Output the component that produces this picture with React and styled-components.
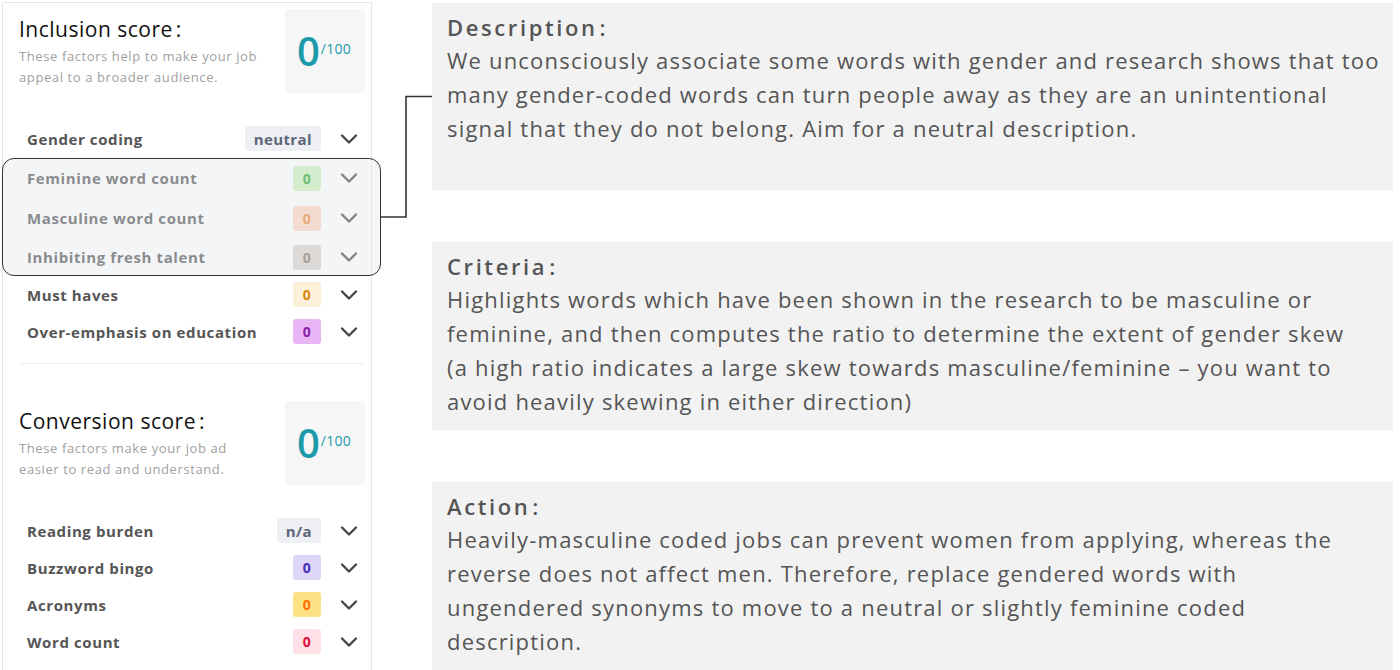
import React from "react";
import styled, { createGlobalStyle } from "styled-components";
import { ChevronDown } from "lucide-react";

const GlobalStyle = createGlobalStyle`
  html, body { margin: 0; padding: 0; background: #fff; }
  body { font-family: "Open Sans", "Liberation Sans", sans-serif; }
  * { box-sizing: border-box; }
`;

const Page = styled.div`
  position: relative;
  display: flex;
  align-items: flex-start;
  height: 670px;
  overflow: hidden;
  padding: 2px 0 0 2px;
`;

const Panel = styled.div`
  width: 370px;
  flex-shrink: 0;
  border: 1px solid #e6e6e6;
  border-bottom: none;
  height: 700px;
`;

const Header = styled.div`
  display: flex;
  justify-content: space-between;
  align-items: flex-start;
  padding: ${(p) => p.$top}px 6px 0 16px;
`;

const HeadText = styled.div`
  padding-top: 8px;
`;

const Title = styled.div`
  font-size: 21px;
  line-height: 24px;
  font-weight: 500;
  color: #111;
  letter-spacing: 0.5px;
`;

const Colon = styled.span`
  margin-left: ${(p) => p.$gap || 3}px;
`;

const Subtitle = styled.div`
  margin-top: 5px;
  font-size: 13px;
  line-height: 21px;
  color: #a0a0a0;
  letter-spacing: 0.6px;
  width: 250px;
`;

const ScoreBox = styled.div`
  width: 80px;
  height: 84px;
  background: #f6f6f6;
  border-radius: 4px;
  display: flex;
  align-items: center;
  justify-content: center;
  color: #1c9aaa;
  padding-right: 2px;
`;

const ScoreBig = styled.span`
  font-size: 40px;
  line-height: 1;
  font-weight: 600;
`;

const ScoreSmall = styled.span`
  font-size: 14px;
  align-self: flex-start;
  margin-top: 30px;
  margin-left: 1px;
  letter-spacing: 0.3px;
`;

const Rows = styled.div`
  margin-top: ${(p) => p.$gap}px;
`;

const Row = styled.div`
  display: flex;
  align-items: center;
  height: ${(p) => p.$h || 37}px;
  padding: 0 8px 0 24px;
`;

const Label = styled.div`
  flex: 1;
  font-size: 15px;
  font-weight: 700;
  letter-spacing: 0.6px;
  color: #555;
`;

const Badge = styled.div`
  min-width: 28px;
  height: 25px;
  padding: 0 ${(p) => (p.$wide ? 9 : 6)}px;
  border-radius: 3px;
  display: inline-flex;
  align-items: center;
  justify-content: center;
  font-size: ${(p) => (p.$wide ? 15 : 14)}px;
  font-weight: 700;
  letter-spacing: 0.4px;
  background: ${(p) => p.$bg};
  color: ${(p) => p.$fg};
`;

const Chevron = styled.div`
  width: 28px;
  margin-left: 14px;
  display: flex;
  align-items: center;
  justify-content: center;
  color: #444;
`;

const Group = styled.div`
  position: relative;
  &::after {
    content: "";
    position: absolute;
    left: -1px;
    right: -10px;
    top: 0;
    bottom: 0;
    border: 1.5px solid #333;
    border-radius: 12px;
    background: rgba(227, 229, 235, 0.38);
    pointer-events: none;
  }
`;

const Divider = styled.div`
  height: 1px;
  background: #eeeeee;
  margin: 13px 6px 0 16px;
`;

const RightCol = styled.div`
  margin-left: 60px;
  padding-top: 1px;
  width: 961px;
  display: flex;
  flex-direction: column;
  gap: 52px;
`;

const InfoBox = styled.div`
  background: #f2f2f2;
  height: ${(p) => p.$h}px;
  padding: 11px 15px 0 15px;
  color: #555;
  flex-shrink: 0;
`;

const InfoTitle = styled.div`
  font-size: 22px;
  line-height: 26px;
  font-weight: 600;
  letter-spacing: 2.6px;
  color: #555;
`;

const InfoBody = styled.div`
  margin-top: 3px;
  font-size: 22px;
  line-height: 34px;
  letter-spacing: 1.2px;
  color: #555;
  white-space: nowrap;
`;

const Connector = styled.svg`
  position: absolute;
  left: 0;
  top: 0;
  pointer-events: none;
`;

const Score = () => (
  <ScoreBox>
    <ScoreBig>0</ScoreBig>
    <ScoreSmall>/100</ScoreSmall>
  </ScoreBox>
);

const Item = ({ label, value, bg, fg, wide, h }) => (
  <Row $h={h}>
    <Label>{label}</Label>
    <Badge $bg={bg} $fg={fg} $wide={wide}>
      {value}
    </Badge>
    <Chevron>
      <ChevronDown size={28} strokeWidth={2} />
    </Chevron>
  </Row>
);

const Lines = ({ lines }) =>
  lines.map((l, i) => (
    <React.Fragment key={i}>
      {l}
      {i < lines.length - 1 && <br />}
    </React.Fragment>
  ));

export default function App() {
  return (
    <>
      <GlobalStyle />
      <Page>
        <Panel>
          <Header $top={6}>
            <HeadText>
              <Title>
                Inclusion score<Colon>:</Colon>
              </Title>
              <Subtitle>
                These factors help to make your job appeal to a broader audience.
              </Subtitle>
            </HeadText>
            <Score />
          </Header>
          <Rows $gap={26}>
            <Item label="Gender coding" value="neutral" wide bg="#eef0f4" fg="#5c6679" h={39} />
            <Group>
              <Item label="Feminine word count" value="0" bg="#ccf3be" fg="#2aa52a" h={40} />
              <Item label="Masculine word count" value="0" bg="#fdd6bf" fg="#ec8536" h={40} />
              <Item label="Inhibiting fresh talent" value="0" bg="#dad2cc" fg="#8a7468" h={38} />
            </Group>
            <Item label="Must haves" value="0" bg="#fdf0da" fg="#d9880c" />
            <Item label="Over-emphasis on education" value="0" bg="#e8b6f4" fg="#8a1fa8" />
          </Rows>
          <Divider />
          <Header $top={37}>
            <HeadText>
              <Title>
                Conversion score<Colon>:</Colon>
              </Title>
              <Subtitle>
                These factors make your job ad easier to read and understand.
              </Subtitle>
            </HeadText>
            <Score />
          </Header>
          <Rows $gap={27}>
            <Item label="Reading burden" value="n/a" wide bg="#eef0f4" fg="#5c6679" />
            <Item label="Buzzword bingo" value="0" bg="#ddd6f7" fg="#4830b0" />
            <Item label="Acronyms" value="0" bg="#ffe185" fg="#ff6f00" />
            <Item label="Word count" value="0" bg="#ffe1e7" fg="#e4093b" />
          </Rows>
        </Panel>
        <RightCol>
          <InfoBox $h={187}>
            <InfoTitle>
              Description<Colon $gap={2}>:</Colon>
            </InfoTitle>
            <InfoBody>
              <Lines
                lines={[
                  "We unconsciously associate some words with gender and research shows that too",
                  "many gender-coded words can turn people away as they are an unintentional",
                  "signal that they do not belong. Aim for a neutral description.",
                ]}
              />
            </InfoBody>
          </InfoBox>
          <InfoBox $h={188}>
            <InfoTitle>
              Criteria<Colon $gap={2}>:</Colon>
            </InfoTitle>
            <InfoBody>
              <Lines
                lines={[
                  "Highlights words which have been shown in the research to be masculine or",
                  "feminine, and then computes the ratio to determine the extent of gender skew",
                  "(a high ratio indicates a large skew towards masculine/feminine \u2013 you want to",
                  "avoid heavily skewing in either direction)",
                ]}
              />
            </InfoBody>
          </InfoBox>
          <InfoBox $h={190}>
            <InfoTitle>
              Action<Colon $gap={2}>:</Colon>
            </InfoTitle>
            <InfoBody>
              <Lines
                lines={[
                  "Heavily-masculine coded jobs can prevent women from applying, whereas the",
                  "reverse does not affect men. Therefore, replace gendered words with",
                  "ungendered synonyms to move to a neutral or slightly feminine coded",
                  "description.",
                ]}
              />
            </InfoBody>
          </InfoBox>
        </RightCol>
        <Connector width="440" height="230" viewBox="0 0 440 230">
          <polyline
            points="381,217 406,217 406,96.5 432,96.5"
            fill="none"
            stroke="#333"
            strokeWidth="1.6"
          />
        </Connector>
      </Page>
    </>
  );
}
